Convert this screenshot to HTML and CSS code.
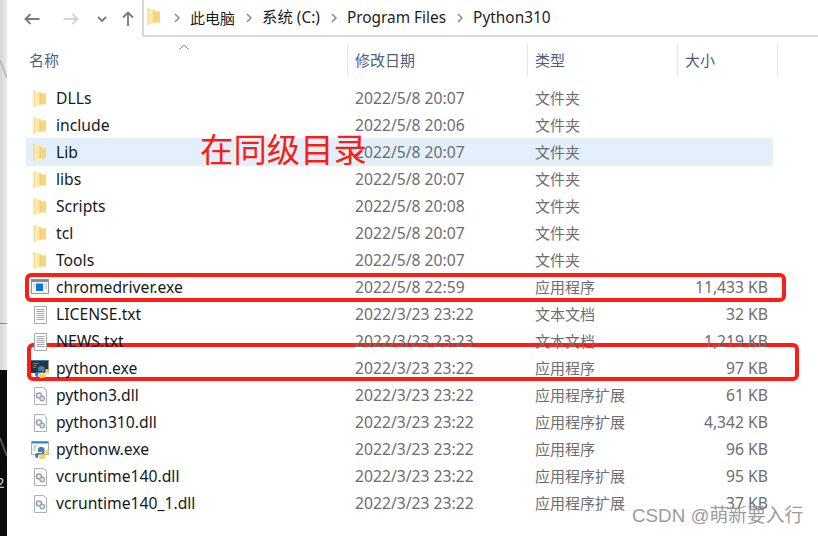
FILE: index.html
```html
<!DOCTYPE html>
<html lang="zh-CN">
<head>
<meta charset="utf-8">
<title>Python310</title>
<link rel="stylesheet" href="styles.css">
</head>
<body>
<svg class="defs" width="0" height="0" aria-hidden="true">
  <defs>
    <symbol id="folder" viewBox="0 0 18 18">
      <path d="M5 2 H9.500 V3 H15 V14.500 H5 Z" fill="#f9d67c"/>
      <path d="M9 3 H15 V4 H9 Z" fill="#fde7a4"/>
      <path d="M3 0 L9 2 V15 L3 17 Z" fill="#fdeaae"/>
      <path d="M9 2 V15" stroke="#eec469" stroke-width="1" fill="none"/>
      <path d="M3 0 V17" stroke="#f2d07c" stroke-width="1" fill="none"/>
    </symbol>
    <symbol id="txt" viewBox="0 0 18 18">
      <path d="M3.500 .5 H15.500 V17.500 H3.500 Z" fill="#fff" stroke="#aaaaaa"/>
      <path d="M5.500 3.500 H13.500 M5.500 5.500 H13.500 M5.500 7.500 H13.500 M5.500 9.500 H13.500 M5.500 11.500 H13.500 M5.500 13.500 H13.500" stroke="#a8a8a8" stroke-width="1"/>
    </symbol>
    <symbol id="dll" viewBox="0 0 18 18">
      <path d="M3.500 .5 H12.500 L15.500 3.500 V17.500 H3.500 Z" fill="#fff" stroke="#b0b0b0"/>
      <circle cx="8" cy="8.500" r="2.600" fill="#ececec" stroke="#9a9a9a" stroke-width="1.400"/>
      <circle cx="11.200" cy="11.500" r="2.300" fill="#d5e5f5" stroke="#8ba3bc" stroke-width="1.200"/>
    </symbol>
    <symbol id="chrome" viewBox="0 0 18 18">
      <rect x=".5" y=".5" width="17" height="14" fill="#f6f6f6" stroke="#8d98a6"/>
      <path d="M1 2 H17" stroke="#7f8c9c" stroke-width="2"/>
      <rect x="5" y="4.500" width="7" height="7.500" fill="#0a78d7"/>
      <path d="M2.500 5 H4 M2.500 7 H4 M2.500 9 H4 M13.500 5 H16 M13.500 7 H16 M13.500 9 H16" stroke="#b8bec6"/>
    </symbol>
    <symbol id="pyexe" viewBox="0 0 18 18">
      <rect x="0" y="0" width="17.500" height="13" fill="#2a3238"/>
      <path d="M0 .5 H17.500" stroke="#2c78b8"/>
      <path d="M2 3.500 H8 M2 5.500 H6 M2 7.500 H5" stroke="#4f9a58"/>
      <path d="M10 6 C7 6 7 8 7 9 V11 H11 V12 H6 C4.500 12 4 13.500 4 14.500 C4 16 5 17 6 17 H7 V15 C7 14 8 13 9 13 H12 C13 13 13.500 12.500 13.500 11.500 V8 C13.500 6.500 12 6 10 6 Z" fill="#3f7fb5"/>
      <path d="M11 18 C14 18 14.500 16.500 14.500 15.500 V14 H10.500 V13.500 H15.500 C17 13.500 18 12.500 18 11 C18 10 17 9 15.500 9 H14.500 V11 C14.500 12.500 13.500 13.500 12.500 13.500 H9.500 C8.500 13.500 8 14 8 15 V16 C8 17.500 9.500 18 11 18 Z" fill="#ffd240"/>
    </symbol>
    <symbol id="pyw" viewBox="0 0 18 18">
      <rect x=".5" y=".5" width="17" height="13" fill="#fff" stroke="#9fb4c8"/>
      <path d="M1 1.500 H17" stroke="#2c86d0" stroke-width="2"/>
      <path d="M2 5 H6 M2 7 H5 M2 9 H4" stroke="#b5b5b5"/>
      <path d="M10 6 C7 6 7 8 7 9 V11 H11 V12 H6 C4.500 12 4 13.500 4 14.500 C4 16 5 17 6 17 H7 V15 C7 14 8 13 9 13 H12 C13 13 13.500 12.500 13.500 11.500 V8 C13.500 6.500 12 6 10 6 Z" fill="#3f7fb5"/>
      <path d="M11 18 C14 18 14.500 16.500 14.500 15.500 V14 H10.500 V13.500 H15.500 C17 13.500 18 12.500 18 11 C18 10 17 9 15.500 9 H14.500 V11 C14.500 12.500 13.500 13.500 12.500 13.500 H9.500 C8.500 13.500 8 14 8 15 V16 C8 17.500 9.500 18 11 18 Z" fill="#ffd240"/>
    </symbol>
  </defs>
</svg>
<div class="page">
  <div class="strip">
    <div class="strip-light">
      <svg class="strip-mark" width="7" height="60" viewBox="0 0 7 60"><path d="M0 30 L7 48" stroke="#bdbdbd" stroke-width="2"/></svg>
    </div>
    <div class="strip-light2"></div>
    <div class="strip-dark">
      <svg class="strip-mark" width="7" height="60" viewBox="0 0 7 60"><path d="M0 38 L7 56" stroke="#555" stroke-width="2"/></svg>
      <span class="strip-char">2</span>
    </div>
  </div>
  <div class="window">
    <div class="toolbar">
      <div class="nav">
        <svg class="nav-back" width="16" height="12" viewBox="0 0 16 12"><path d="M15.500 6 H1.500 M6.500 1 L1.500 6 L6.500 11" fill="none" stroke="#7a7a7a" stroke-width="1.800"/></svg>
        <svg class="nav-forward" width="16" height="12" viewBox="0 0 16 12"><path d="M.5 6 H14.500 M9.500 1 L14.500 6 L9.500 11" fill="none" stroke="#d4d4d4" stroke-width="1.800"/></svg>
        <svg class="nav-down" width="10" height="6" viewBox="0 0 10 6"><path d="M1 1 L5 5 L9 1" fill="none" stroke="#7a7a7a" stroke-width="1.800"/></svg>
        <svg class="nav-up" width="12" height="15" viewBox="0 0 12 15"><path d="M6 15 V1.500 M1 6.500 L6 1.500 L11 6.500" fill="none" stroke="#7a7a7a" stroke-width="1.800"/></svg>
      </div>
      <div class="address">
        <svg class="addr-folder"><use href="#folder"/></svg>
        <svg class="chev" width="6" height="10" viewBox="0 0 6 10"><path d="M1 1 L5 5 L1 9" fill="none" stroke="#8a8a8a" stroke-width="1.500"/></svg>
        <span class="crumb crumb-cjk">此电脑</span>
        <svg class="chev" width="6" height="10" viewBox="0 0 6 10"><path d="M1 1 L5 5 L1 9" fill="none" stroke="#8a8a8a" stroke-width="1.500"/></svg>
        <span class="crumb">系统 (C:)</span>
        <svg class="chev" width="6" height="10" viewBox="0 0 6 10"><path d="M1 1 L5 5 L1 9" fill="none" stroke="#8a8a8a" stroke-width="1.500"/></svg>
        <span class="crumb">Program Files</span>
        <svg class="chev" width="6" height="10" viewBox="0 0 6 10"><path d="M1 1 L5 5 L1 9" fill="none" stroke="#8a8a8a" stroke-width="1.500"/></svg>
        <span class="crumb">Python310</span>
      </div>
    </div>
    <div class="head">
      <div class="hcell hname">名称<svg class="sort" width="10" height="6" viewBox="0 0 10 6"><path d="M.5 5.500 L5 1 L9.500 5.500" fill="none" stroke="#9a9a9a"/></svg></div>
      <div class="hcell">修改日期</div>
      <div class="hcell">类型</div>
      <div class="hcell">大小</div>
    </div>
    <div class="list">
      <div class="mark mark-a"></div>
      <div class="mark mark-b"></div>
      <div class="note">在同级目录</div>
      <div class="row"><div class="name"><svg class="ico"><use href="#folder"/></svg>DLLs</div><div class="cell">2022/5/8 20:07</div><div class="type">文件夹</div><div class="size"></div></div>
      <div class="row"><div class="name"><svg class="ico"><use href="#folder"/></svg>include</div><div class="cell">2022/5/8 20:06</div><div class="type">文件夹</div><div class="size"></div></div>
      <div class="row sel"><div class="name"><svg class="ico"><use href="#folder"/></svg>Lib</div><div class="cell">2022/5/8 20:07</div><div class="type">文件夹</div><div class="size"></div></div>
      <div class="row"><div class="name"><svg class="ico"><use href="#folder"/></svg>libs</div><div class="cell">2022/5/8 20:07</div><div class="type">文件夹</div><div class="size"></div></div>
      <div class="row"><div class="name"><svg class="ico"><use href="#folder"/></svg>Scripts</div><div class="cell">2022/5/8 20:08</div><div class="type">文件夹</div><div class="size"></div></div>
      <div class="row"><div class="name"><svg class="ico"><use href="#folder"/></svg>tcl</div><div class="cell">2022/5/8 20:07</div><div class="type">文件夹</div><div class="size"></div></div>
      <div class="row"><div class="name"><svg class="ico"><use href="#folder"/></svg>Tools</div><div class="cell">2022/5/8 20:07</div><div class="type">文件夹</div><div class="size"></div></div>
      <div class="row"><div class="name"><svg class="ico"><use href="#chrome"/></svg>chromedriver.exe</div><div class="cell">2022/5/8 22:59</div><div class="type">应用程序</div><div class="size">11,433 KB</div></div>
      <div class="row"><div class="name"><svg class="ico"><use href="#txt"/></svg>LICENSE.txt</div><div class="cell">2022/3/23 23:22</div><div class="type">文本文档</div><div class="size">32 KB</div></div>
      <div class="row"><div class="name"><svg class="ico"><use href="#txt"/></svg>NEWS.txt</div><div class="cell">2022/3/23 23:23</div><div class="type">文本文档</div><div class="size">1,219 KB</div></div>
      <div class="row top"><div class="name"><svg class="ico"><use href="#pyexe"/></svg>python.exe</div><div class="cell">2022/3/23 23:22</div><div class="type">应用程序</div><div class="size">97 KB</div></div>
      <div class="row"><div class="name"><svg class="ico"><use href="#dll"/></svg>python3.dll</div><div class="cell">2022/3/23 23:22</div><div class="type">应用程序扩展</div><div class="size">61 KB</div></div>
      <div class="row"><div class="name"><svg class="ico"><use href="#dll"/></svg>python310.dll</div><div class="cell">2022/3/23 23:22</div><div class="type">应用程序扩展</div><div class="size">4,342 KB</div></div>
      <div class="row"><div class="name"><svg class="ico"><use href="#pyw"/></svg>pythonw.exe</div><div class="cell">2022/3/23 23:22</div><div class="type">应用程序</div><div class="size">96 KB</div></div>
      <div class="row"><div class="name"><svg class="ico"><use href="#dll"/></svg>vcruntime140.dll</div><div class="cell">2022/3/23 23:22</div><div class="type">应用程序扩展</div><div class="size">95 KB</div></div>
      <div class="row"><div class="name"><svg class="ico"><use href="#dll"/></svg>vcruntime140_1.dll</div><div class="cell">2022/3/23 23:22</div><div class="type">应用程序扩展</div><div class="size">37 KB</div></div>
    </div>
    <div class="watermark">CSDN @萌新要入行</div>
  </div>
</div>
</body>
</html>
```
FILE: styles.css
```css
* { box-sizing: border-box; }
html, body { margin: 0; padding: 0; }
body {
  width: 818px;
  height: 536px;
  overflow: hidden;
  background: #fff;
  font-family: "Noto Sans", "Noto Sans CJK SC", sans-serif;
  font-size: 15px;
}
.defs { position: absolute; }
.page { display: flex; height: 536px; }

.strip { width: 7px; flex: none; display: flex; flex-direction: column; }
.strip-light { height: 324px; background: linear-gradient(90deg, #d6d6d6, #ececec); border-bottom: 1px solid #8a8a8a; }
.strip-light2 { height: 46px; background: linear-gradient(90deg, #d6d6d6, #ececec); }
.strip-dark { flex: 1; background: #0c0c0c; position: relative; overflow: hidden; }
.strip-mark { display: block; margin-top: 30px; }
.strip-char { position: absolute; left: -4px; top: 102px; color: #bfc8d0; font-size: 15px; line-height: 20px; }

.window { flex: 1; position: relative; min-width: 0; }

.toolbar { display: flex; height: 37px; }
.nav { width: 135px; flex: none; display: flex; align-items: center; padding-left: 17px; }
.nav-forward { margin-left: 23px; }
.nav-down { margin-left: 18px; }
.nav-up { margin-left: 15px; }
.address {
  flex: 1;
  display: flex;
  align-items: center;
  border-left: 2px solid #d9d9d9;
  border-bottom: 2px solid #d9d9d9;
  padding-left: 1px;
  color: #1c1c1c;
}
.addr-folder { width: 18px; height: 18px; margin-top: -1px; flex: none; }
.chev { margin: 0 10px 0 11px; flex: none; }
.crumb { line-height: 20px; font-size: 15.4px; }
.crumb-cjk { font-size: 15px; }

.head {
  display: grid;
  grid-template-columns: 321px 180px 150px 100px;
  margin: 7px 0 0 20px;
  height: 32px;
}
.hcell {
  color: #4c607a;
  padding-left: 7px;
  line-height: 32px;
  border-right: 1px solid #e5e5e5;
  position: relative;
}
.hname { padding-left: 2px; }
.sort { position: absolute; left: 152px; top: 0; }

.list { position: relative; margin: 9px 0 0 19px; width: 747px; }
.row {
  display: grid;
  grid-template-columns: 321px 180px 150px 96px;
  height: 27px;
  line-height: 27px;
  align-items: center;
  position: relative;
  z-index: 2;
  font-size: 15.7px;
}
.sel { background: #e3f0fb; box-shadow: 0 -1px 0 #e3f0fb; z-index: 0; }
.top { z-index: 3; }
.name { display: flex; align-items: center; padding-left: 5px; color: #141a22; }
.ico { width: 18px; height: 18px; margin-right: 7px; flex: none; }
.cell { padding-left: 8px; color: #6d6d6d; }
.type { padding-left: 8px; color: #6d6d6d; font-size: 15px; }
.size { text-align: right; padding-right: 5px; color: #6d6d6d; }

.mark { position: absolute; border: 4px solid #fb1e14; border-radius: 6px; }
.mark-a { left: -1px; top: 188px; width: 761px; height: 29px; z-index: 1; }
.mark-b { left: 1px; top: 258px; width: 772px; height: 38px; background: #fff; z-index: 2; }
.note {
  position: absolute;
  left: 174px;
  top: 41px;
  z-index: 4;
  color: #fb1e14;
  font-family: "Noto Sans CJK SC", sans-serif;
  font-size: 33.400px;
  line-height: 44px;
  white-space: nowrap;
}
.watermark {
  position: absolute;
  left: 625px;
  top: 503px;
  color: #9c9c9c;
  font-family: "Liberation Sans", "Noto Sans CJK SC", sans-serif;
  font-size: 18.800px;
  line-height: 26px;
  white-space: nowrap;
  z-index: 5;
}
```
